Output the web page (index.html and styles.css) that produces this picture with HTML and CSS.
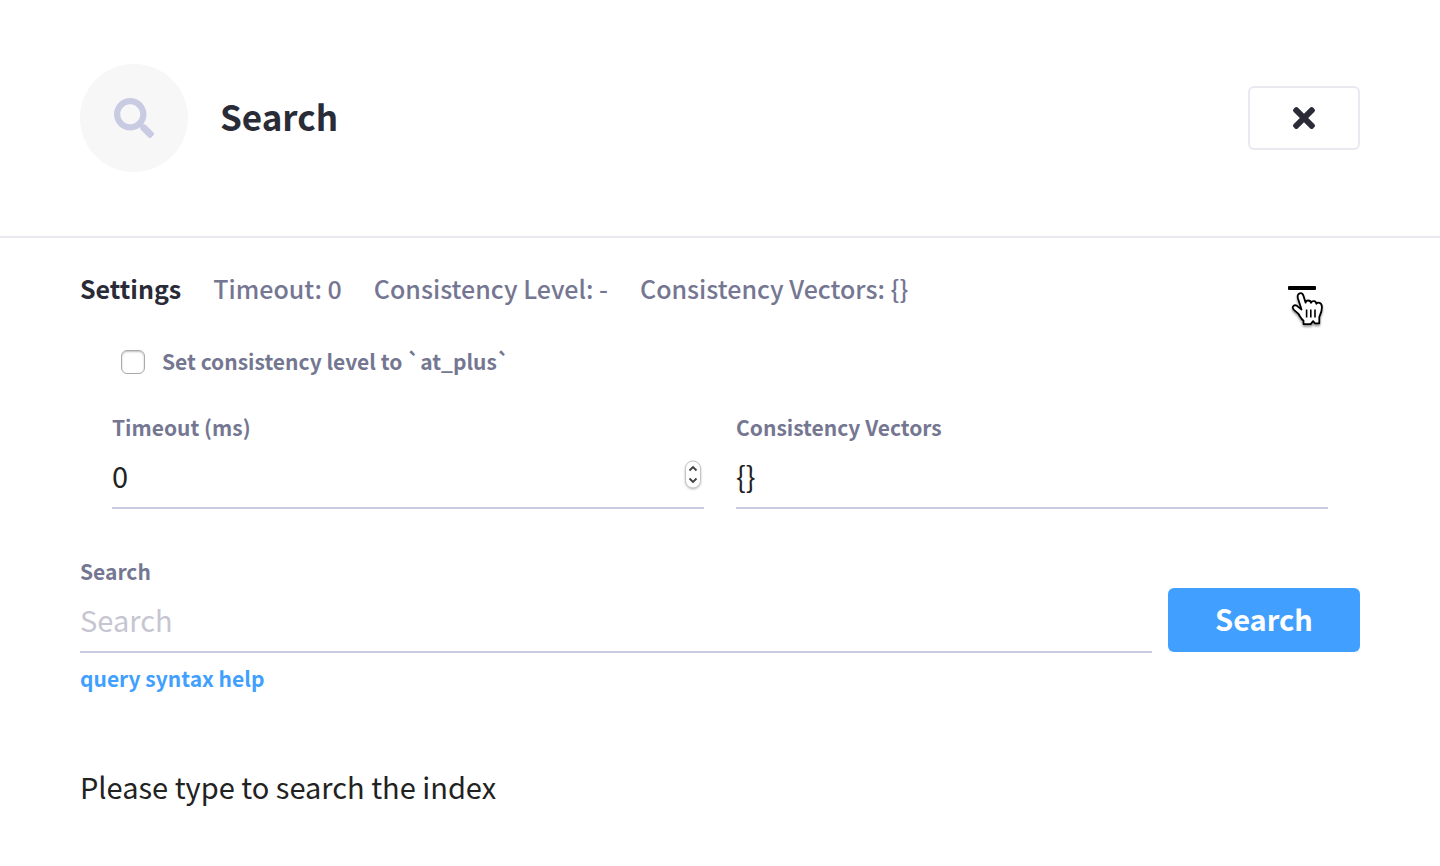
FILE: index.html
```html
<!DOCTYPE html>
<html lang="en">
<head>
<meta charset="utf-8">
<title>Search</title>
<link rel="stylesheet" href="styles.css">
</head>
<body>
<header class="header">
  <span class="badge">
    <svg width="40" height="40" viewBox="0 0 512 512" aria-hidden="true"><path fill="#c9cbe3" d="M505 442.7L405.3 343c-4.5-4.5-10.6-7-17-7H372c27.6-35.3 44-79.7 44-128C416 93.1 322.9 0 208 0S0 93.1 0 208s93.1 208 208 208c48.3 0 92.7-16.4 128-44v16.3c0 6.4 2.5 12.5 7 17l99.7 99.7c9.4 9.4 24.6 9.4 33.9 0l28.3-28.3c9.4-9.4 9.4-24.6.1-34zM208 336c-70.7 0-128-57.2-128-128 0-70.7 57.2-128 128-128 70.7 0 128 57.2 128 128 0 70.7-57.2 128-128 128z"/></svg>
  </span>
  <h1 class="title">Search</h1>
  <button class="close" type="button" aria-label="Close">
    <svg width="22" height="22" viewBox="0 80 352 352" aria-hidden="true"><path fill="#292b37" d="M242.72 256l100.07-100.07c12.28-12.28 12.28-32.19 0-44.48l-22.24-22.24c-12.28-12.28-32.19-12.28-44.48 0L176 189.28 75.93 89.21c-12.28-12.28-32.19-12.28-44.48 0L9.21 111.45c-12.28 12.28-12.28 32.19 0 44.48L109.28 256 9.21 356.07c-12.28 12.28-12.28 32.19 0 44.48l22.24 22.24c12.28 12.28 32.2 12.28 44.48 0L176 322.72l100.07 100.07c12.28 12.28 32.2 12.28 44.48 0l22.24-22.24c12.28-12.28 12.28-32.19 0-44.48L242.72 256z"/></svg>
  </button>
</header>
<main class="main">
  <section class="settings">
    <div class="summary">
      <h2 class="summary-title">Settings</h2>
      <span>Timeout: 0</span>
      <span>Consistency Level: -</span>
      <span>Consistency Vectors: {}</span>
      <button class="collapse" type="button" aria-label="Collapse settings"><span class="minus"></span>
        <svg class="pointer" width="36" height="40" viewBox="0 0 36 40" aria-hidden="true"><path d="M11.5 21.5 8 10.5C7.2 7.7 8 5.8 9.8 5.3c2-.5 3.2.8 3.8 2.9l2 6.5c.1-1.5 1-2.2 2.6-2.2 1.7 0 2.6.9 2.8 2.3.5-1.2 1.6-1.8 3-1.6 1.5.2 2.2 1.2 2.4 2.6.7-.9 1.8-1.3 3-1 2.200.5 2.600 2.400 2.500 5-.1 4-1.2 6-2.6 9.200V35.300h-4.400l-1.800-2.200-2.400 3h-7.200v-3.300c-2.600-2.200-3.400-4.600-5.300-7.200l-4-3.500c-1.600-1.500-1.900-3-.9-4 1.400-1.400 3.400-.8 5.200 1z" fill="#fff" stroke="#000" stroke-width="1.8" stroke-linejoin="round"/><path d="M16.6 21.5v8M20.8 21.5v8M25 21.5v8" stroke="#000" stroke-width="1.6"/></svg>
      </button>
    </div>
    <div class="panel">
      <label class="check"><input class="check-box" type="checkbox"><span class="check-text">Set consistency level to `at_plus`</span></label>
      <div class="fields">
        <div class="field">
          <label class="label" for="timeout">Timeout (ms)</label>
          <span class="control"><input class="input" id="timeout" type="number" value="0">
            <svg class="stepper" width="20" height="32" viewBox="0 0 20 32" aria-hidden="true"><rect x="2.5" y="2" width="15" height="27" rx="7.5" fill="#fff" stroke="#c4c4c4"/><path d="m6.5 11.5 3.5-3.5 3.5 3.5M6.5 19.5l3.5 3.5 3.5-3.5" fill="none" stroke="#404040" stroke-width="1.8"/></svg>
          </span>
        </div>
        <div class="field">
          <label class="label" for="vectors">Consistency Vectors</label>
          <input class="input" id="vectors" type="text" value="{}">
        </div>
      </div>
    </div>
  </section>
  <form class="search">
    <div class="field">
      <label class="label" for="query">Search</label>
      <input class="input" id="query" type="text" placeholder="Search">
    </div>
    <button class="submit" type="button">Search</button>
  </form>
  <a class="help" href="#">query syntax help</a>
  <p class="hint">Please type to search the index</p>
</main>
</body>
</html>
```
FILE: styles.css
```css
* { box-sizing: border-box; }
body {
  margin: 0;
  background: #fff;
  color: #292b37;
  font-family: "Noto Sans CJK SC", "Noto Sans", sans-serif;
}
button, input { font: inherit; color: inherit; }
svg { display: block; }
.header {
  display: flex;
  align-items: center;
  gap: 32px;
  padding: 64px 80px;
  border-bottom: 2px solid #e9e9f1;
}
.badge {
  display: grid;
  place-items: center;
  width: 108px;
  height: 108px;
  border-radius: 50%;
  background: #f7f7f7;
}
.title {
  flex: 1;
  margin: 0;
  padding-bottom: 4px;
  font-size: 35px;
  line-height: 48px;
  font-weight: 700;
}
.close {
  display: grid;
  place-items: center;
  width: 112px;
  height: 64px;
  padding: 0;
  border: 2px solid #e9e9f1;
  border-radius: 6px;
  background: #fff;
}
.main { padding: 30px 80px; }
.summary {
  display: flex;
  align-items: center;
  gap: 32px;
  font-size: 25px;
  line-height: 40px;
  font-weight: 500;
  color: #757792;
}
.summary-title { margin: 0; font: inherit; font-weight: 700; color: #292b37; }
.collapse {
  position: relative;
  width: 28px;
  height: 40px;
  margin: 0 44px 0 auto;
  padding: 0;
  border: 0;
  background: none;
}
.minus { display: block; height: 4px; border-radius: 1px; background: #000; }
.pointer {
  position: absolute;
  left: 2px;
  top: 20px;
  filter: drop-shadow(0 2px 1px rgba(0, 0, 0, 0.4));
}
.panel { padding: 34px 32px 0; }
.check {
  display: flex;
  align-items: center;
  gap: 17px;
  padding: 0 9px;
  font-size: 21px;
  line-height: 38px;
  font-weight: 700;
  color: #757792;
}
.check-text { padding-bottom: 2px; }
.check-box {
  appearance: none;
  width: 24px;
  height: 24px;
  margin: 0;
  border: 1px solid #aaa;
  border-radius: 6px;
  background: #fff;
  box-shadow: inset 0 1px 2px rgba(0, 0, 0, 0.25);
}
.fields { display: flex; gap: 32px; padding-top: 29px; }
.field { display: flex; flex: 1; flex-direction: column; min-width: 0; }
.label { font-size: 21px; line-height: 32px; font-weight: 700; color: #757792; }
.control { position: relative; display: flex; }
.input {
  width: 100%;
  height: 66px;
  padding: 0;
  border: 0;
  border-bottom: 2px solid #c9cbe3;
  border-radius: 0;
  outline: 0;
  background: none;
  font-size: 29px;
  line-height: 40px;
  color: #222;
  appearance: textfield;
}
.input::-webkit-inner-spin-button { appearance: none; margin: 0; }
.input::placeholder { color: #c6c6d2; opacity: 1; }
.stepper {
  position: absolute;
  right: 1px;
  top: 16px;
  filter: drop-shadow(0 1px 1px rgba(0, 0, 0, 0.25));
}
.search { display: flex; align-items: flex-end; gap: 16px; margin-top: 46px; }
.submit {
  width: 192px;
  height: 64px;
  margin-bottom: 1px;
  padding: 0 0 5px;
  border: 0;
  border-radius: 6px;
  background: #409fff;
  color: #fff;
  font-size: 29px;
  font-weight: 700;
}
.help {
  display: inline-block;
  margin-top: 9px;
  font-size: 21px;
  line-height: 32px;
  font-weight: 700;
  color: #409fff;
  text-decoration: none;
}
.hint { margin: 72px 0 0; font-size: 29px; line-height: 40px; color: #222; }
```
